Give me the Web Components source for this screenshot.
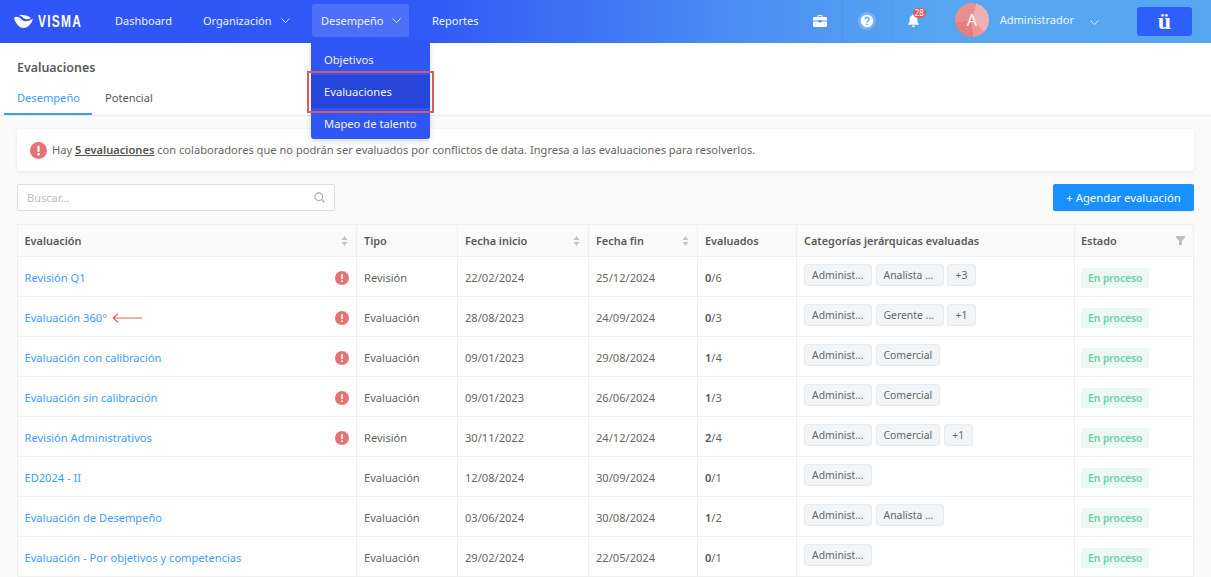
<!DOCTYPE html>
<html lang="es"><head><meta charset="utf-8"><title>Evaluaciones</title>
<style>
html,body{margin:0;padding:0;height:577px;overflow:hidden;background:#fafafa;font-family:"Noto Sans","Open Sans",sans-serif;}
</style></head><body>
<app-shell>
  <top-nav></top-nav>
  <page-head title="Evaluaciones"></page-head>
  <main-area>
    <alert-card></alert-card>
    <tool-bar></tool-bar>
    <eval-table>
      <eval-row name="Revisión Q1" warn tipo="Revisión" ini="22/02/2024" fin="25/12/2024" done="0" total="6" cats="Administ...|Analista ...|+3"></eval-row>
      <eval-row name="Evaluación 360°" warn arrow tipo="Evaluación" ini="28/08/2023" fin="24/09/2024" done="0" total="3" cats="Administ...|Gerente ...|+1"></eval-row>
      <eval-row name="Evaluación con calibración" warn tipo="Evaluación" ini="09/01/2023" fin="29/08/2024" done="1" total="4" cats="Administ...|Comercial"></eval-row>
      <eval-row name="Evaluación sin calibración" warn tipo="Evaluación" ini="09/01/2023" fin="26/06/2024" done="1" total="3" cats="Administ...|Comercial"></eval-row>
      <eval-row name="Revisión Administrativos" warn tipo="Revisión" ini="30/11/2022" fin="24/12/2024" done="2" total="4" cats="Administ...|Comercial|+1"></eval-row>
      <eval-row name="ED2024 - II" tipo="Evaluación" ini="12/08/2024" fin="30/09/2024" done="0" total="1" cats="Administ..."></eval-row>
      <eval-row name="Evaluación de Desempeño" tipo="Evaluación" ini="03/06/2024" fin="30/08/2024" done="1" total="2" cats="Administ...|Analista ..."></eval-row>
      <eval-row name="Evaluación - Por objetivos y competencias" tipo="Evaluación" ini="29/02/2024" fin="22/05/2024" done="0" total="1" cats="Administ..."></eval-row>
    </eval-table>
  </main-area>
</app-shell>
<script>
const FONT='"Noto Sans","Open Sans",sans-serif';
const warnIcon=(s)=>`<svg width="${s}" height="${s}" viewBox="0 0 16 16" aria-hidden="true"><circle cx="8" cy="8" r="8" fill="#e57373"/><rect x="7" y="3.4" width="2" height="6" rx="1" fill="#fff"/><circle cx="8" cy="11.6" r="1.15" fill="#fff"/></svg>`;
const chev=`<svg width="9" height="5" viewBox="0 0 9 5" aria-hidden="true"><path d="M.4.5 4.500 4.500 8.600.5" fill="none" stroke="currentColor" stroke-width=".9"/></svg>`;
const sortIcon=`<svg width="7" height="10" viewBox="0 0 7 10" aria-hidden="true"><path d="M3.500 0 6.600 4H.4zM3.500 10 .4 6h6.200z" fill="#c4c4c4"/></svg>`;
function def(name,render){customElements.define(name,class extends HTMLElement{constructor(){super();this.attachShadow({mode:'open'});}connectedCallback(){this.shadowRoot.innerHTML=render(this);}});}

def('app-shell',()=>`<style>:host{display:block;position:relative;height:577px;overflow:hidden;background:#fafafa;font-family:${FONT};font-size:11.100px;color:#595959}</style><slot></slot>`);

def('top-nav',()=>`<style>
:host{display:flex;align-items:stretch;height:43px;background:linear-gradient(90deg,#2f55f6 0%,#3159f6 35%,#4a8cf2 60%,#57a6f1 78%,#57a6f1 100%);color:#fff;font-size:11px;box-sizing:border-box;position:relative;line-height:16px}
.logo{display:flex;align-items:center;gap:5px;width:84px;padding-left:14px;flex:none;border-right:1px solid rgba(30,60,200,.1);overflow:hidden}
.logo svg{flex:none}
.logo span{flex:none;font:700 17px/1 "Liberation Sans",sans-serif;letter-spacing:1.800px;transform:scaleX(.7);transform-origin:left;position:relative;top:-.5px}
.it{display:flex;align-items:center;gap:9px;white-space:nowrap;color:#eef3ff}
.d{width:88px;padding-left:16px;box-sizing:border-box;border-right:1px solid rgba(30,60,200,.1)}
.o{width:117px;padding-left:16px;box-sizing:border-box}
.act{margin:4px 0 6px 8px;width:97px;padding-left:9px;box-sizing:border-box;background:rgba(255,255,255,.14);border-radius:3px}
.r{margin-left:23px}
.d,.o,.r{padding-bottom:2px}
.act{padding-bottom:0}
.sp{flex:1}
.ic{display:flex;align-items:center;justify-content:center;position:relative;border-right:1px solid rgba(40,90,210,.07);box-sizing:border-box;padding-bottom:2px}
.ic.a{width:45px;border-left:1px solid rgba(40,90,210,.07)}.ic.b{width:50px}.ic.c{width:42px}
.badge{position:absolute;left:20px;top:8px;background:#e45b5b;color:#fff;font-size:8px;line-height:10px;height:10px;padding:0 2px;border-radius:6px}
.av{flex:none;width:34px;height:34px;border-radius:50%;align-self:center;margin-left:20px;position:relative;top:-1.500px;background:conic-gradient(from 15deg,#eeb0b0 0 33%,#e89a9a 33% 45%,#e57f7f 45% 68%,#e89090 68% 100%);display:flex;align-items:center;justify-content:center;font-size:16px;color:#fff}
.u{margin-left:11px;color:#f2f6ff;position:relative;top:-2px}
.cv{margin-left:16px;position:relative;top:1px;display:flex;align-items:center;color:#eef3ff}
.ub{flex:none;align-self:center;margin:0 19px 0 38px;width:55px;height:29px;position:relative;top:-.5px;background:#2f5ffa;border-radius:3px;display:flex;align-items:center;justify-content:center;font:700 24px/1 "Liberation Serif",serif;color:#f4f7ff}
svg{display:block}
</style>
<div class="logo"><svg width="19" height="13" viewBox="0 0 19 13" aria-hidden="true"><path d="M0 3C2 .8 5 1.800 8 4.700c3 2.500 6.500 2 11-1.200-1 4.500-5 9.500-9.500 9.500C5 13 1.500 8 0 3zM5 .5C9-.5 14 .5 17 3c-3 1.800-6 1.500-8-.5C7.500 1.200 6.500.7 5 .5z" fill="#fff"/></svg><span>VISMA</span></div>
<div class="it d">Dashboard</div>
<div class="it o">Organización ${chev}</div>
<div class="it act">Desempeño ${chev}</div>
<div class="it r">Reportes</div>
<div class="sp"></div>
<div class="ic a"><svg width="14" height="12" viewBox="0 0 14 12" aria-hidden="true"><path d="M4.500 2V1a1 1 0 0 1 1-1h3a1 1 0 0 1 1 1v1H13a1 1 0 0 1 1 1v2.600H8.500V5h-3v.6H0V3a1 1 0 0 1 1-1zM5.600 2h2.800V1H5.600zM0 6.600h5.500v1h3v-1H14V11a1 1 0 0 1-1 1H1a1 1 0 0 1-1-1z" fill="#fff"/></svg></div>
<div class="ic b"><svg width="20" height="20" viewBox="0 0 20 20" aria-hidden="true"><circle cx="10" cy="10" r="9" fill="#fff" opacity=".22"/><circle cx="10" cy="10" r="6.200" fill="#fff"/><path d="M8 8.300a2 2 0 1 1 3 1.700c-.7.4-1 .8-1 1.500" fill="none" stroke="#57a6f1" stroke-width="1.400"/><circle cx="10" cy="13.400" r=".9" fill="#57a6f1"/></svg></div>
<div class="ic c"><svg width="11" height="13" viewBox="0 0 11 13" aria-hidden="true"><path d="M5.500 0a1 1 0 0 1 1 1v.3C8.300 1.800 9.300 3.300 9.300 5.200c0 2.800.5 3.800 1.500 4.800v.8H.2V10c1-1 1.500-2 1.500-4.800 0-1.900 1-3.400 2.800-3.900V1a1 1 0 0 1 1-1zM4 11.500h3a1.500 1.500 0 0 1-3 0z" fill="#fff"/></svg><span class="badge">28</span></div>
<div class="av">A</div>
<div class="it u">Administrador</div>
<div class="cv">${chev}</div>
<div class="ub">ü</div>`);

def('page-head',(h)=>`<style>
:host{display:block;background:#fff;height:73px;box-sizing:border-box;border-bottom:1px solid #e8e8e8;padding-top:16px;position:relative}
h1{margin:0 0 0 17px;font-size:12.400px;line-height:18px;font-weight:600;color:#595959}
.tabs{display:flex;margin:5px 0 0 4px;height:33px}
.t{font-size:11.100px;line-height:18px;padding:7px 13px 0;color:#595959;box-sizing:border-box;height:33px}
.on{color:#3f9cf8;border-bottom:2px solid #3f9cf8;width:88px;white-space:nowrap}
</style><h1>${h.getAttribute('title')}</h1><div class="tabs"><div class="t on">Desempeño</div><div class="t">Potencial</div></div>`);

def('main-area',()=>`<style>:host{display:flex;flex-direction:column;padding:13px 17px 0 17px}</style><slot></slot>`);

def('alert-card',()=>`<style>
:host{display:flex;align-items:center;gap:5px;height:42px;background:#fff;border-radius:3px;box-shadow:0 1px 4px rgba(0,0,0,.07);padding-left:13px;font-size:11.100px;color:#666}
b{font-weight:600;color:#555;text-decoration:underline}
span{position:relative;top:-.5px}
svg{display:block}
</style>${warnIcon(17)}<span>Hay <b>5 evaluaciones</b> con colaboradores que no podrán ser evaluados por conflictos de data. Ingresa a las evaluaciones para resolverlos.</span>`);

def('tool-bar',()=>`<style>
:host{display:flex;justify-content:space-between;align-items:center;margin-top:13px;height:27px}
.s{width:318px;height:27px;box-sizing:border-box;background:#fff;border:1px solid #dedede;border-radius:2px;display:flex;align-items:center;justify-content:space-between;padding:0 9px;color:#bdbdbd;font-size:11px}
.b{width:141px;height:27px;display:flex;align-items:center;justify-content:center;background:#1890ff;color:#fff;border-radius:2px;font-size:11.300px;box-shadow:0 1px 2px rgba(0,0,0,.08)}
svg{display:block}
</style><div class="s"><span>Buscar...</span><svg width="11" height="11" viewBox="0 0 11 11" aria-hidden="true"><circle cx="4.700" cy="4.700" r="3.800" fill="none" stroke="#a6a6a6" stroke-width="1.100"/><path d="M7.500 7.500 10.400 10.400" stroke="#a6a6a6" stroke-width="1.200"/></svg></div><div class="b">+ Agendar evaluación</div>`);

const COLS='340px 101px 131px 109px 99px 278px 119px';
def('eval-table',()=>`<style>
:host{display:block;margin-top:13px;width:1177px;font-size:11px}
.h{display:grid;grid-template-columns:${COLS};height:33px;background:#fafafa;border:solid #f0f0f0;border-width:1px 0 1px 0;box-sizing:border-box;font-weight:600;color:#595959;font-size:10.900px}
.c{display:flex;align-items:center;justify-content:space-between;padding:0 8px 0 7px;border-right:1px solid #f0f0f0;box-sizing:border-box;white-space:nowrap}
.c.f{border-left:1px solid #f0f0f0;padding-left:6.500px}
.c.l{padding-left:6px}
svg{display:block}
</style><div class="h">
<div class="c f">Evaluación ${sortIcon}</div><div class="c">Tipo</div><div class="c">Fecha inicio ${sortIcon}</div><div class="c">Fecha fin ${sortIcon}</div><div class="c">Evaluados</div><div class="c">Categorías jerárquicas evaluadas</div><div class="c l">Estado <svg width="9" height="9" viewBox="0 0 9 9" aria-hidden="true"><path d="M0 0h9v1.500L6 5v4H3V5L0 1.500z" fill="#bfbfbf"/></svg></div>
</div><slot></slot>`);

def('eval-row',(r)=>{
 const a=n=>r.getAttribute(n);
 const tags=a('cats').split('|').map(t=>`<span class="tag${t.endsWith('...')?' tr':''}">${t}</span>`).join('');
 return `<style>
:host{display:grid;grid-template-columns:${COLS};height:40px;background:#fff;border-bottom:1px solid #f0f0f0;box-sizing:border-box;color:#666;font-size:11.100px}
.c{display:flex;align-items:center;padding:2px 7px 0;border-right:1px solid #f0f0f0;box-sizing:border-box;white-space:nowrap;min-width:0}
.c.f{border-left:1px solid #f0f0f0;justify-content:space-between;padding-left:6.500px}
.c.l{padding-left:6px}
.n{display:flex;align-items:center;gap:5px;color:#3f9cf8}
.w{position:relative;top:.5px}
.cats{gap:3.500px;align-items:flex-start;padding-top:7px}
.tag{display:block;height:22px;line-height:20px;box-sizing:border-box;padding:0 7px;min-width:29px;text-align:center;background:#f2f5f8;border:1px solid #e8ebef;border-radius:3px;font-size:10.400px;color:#666}
.tag.tr{width:68px;text-align:left}
.st{height:20px;line-height:20px;padding:0 7px;background:#ebf8f3;color:#6fcfa9;border-radius:3px;font-size:10.250px;font-weight:600}
b{font-weight:600;color:#555}
svg{display:block;flex:none}
</style>
<div class="c f"><span class="n">${a('name')}${r.hasAttribute('arrow')?`<svg width="30" height="10" viewBox="0 0 30 10" aria-hidden="true"><path d="M30 5H1.500M6 .8 1.200 5 6 9.200" fill="none" stroke="#e0605f" stroke-width="1.200"/></svg>`:''}</span>${r.hasAttribute('warn')?`<span class="w">${warnIcon(14)}</span>`:''}</div>
<div class="c">${a('tipo')}</div><div class="c">${a('ini')}</div><div class="c">${a('fin')}</div>
<div class="c"><b>${a('done')}</b>/${a('total')}</div>
<div class="c cats">${tags}</div>
<div class="c l"><span class="st">En proceso</span></div>`;});

def('drop-menu',()=>`<style>
:host{position:absolute;left:311px;top:43px;width:119px;height:96px;background:#2f55f5;border-radius:0 0 3px 3px;box-shadow:0 2px 6px rgba(0,0,0,.15);color:#eef3ff;font-size:11.200px;z-index:5;display:flex;flex-direction:column;box-sizing:border-box}
.i{display:flex;align-items:center;padding-left:13px;white-space:nowrap}
.s{height:33px;background:#2746d9}
.m{height:31px}
.o{height:32px}
</style><div class="i o">Objetivos</div><div class="i s">Evaluaciones</div><div class="i m">Mapeo de talento</div>`);

def('note-box',()=>`<style>:host{position:absolute;left:307px;top:71px;width:127px;height:42px;box-sizing:border-box;border:2px solid #dc5a5e;z-index:6;pointer-events:none}</style>`);

const shell=document.querySelector('app-shell');
shell.appendChild(document.createElement('drop-menu'));
shell.appendChild(document.createElement('note-box'));
</script>
</body></html>
